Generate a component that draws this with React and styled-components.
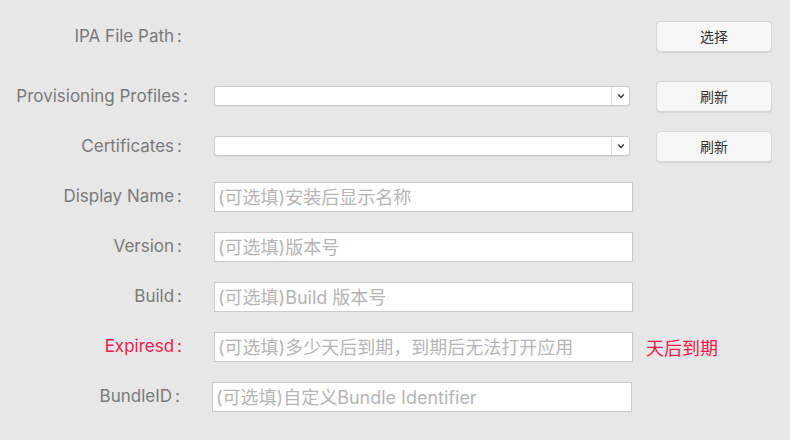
import React from "react";
import styled, { createGlobalStyle } from "styled-components";

const GlobalStyle = createGlobalStyle`
  html, body {
    margin: 0;
    padding: 0;
    background: #e7e7e7;
  }
  body {
    font-family: Inter, "Noto Sans CJK SC", sans-serif;
  }
`;

const Form = styled.div`
  width: 790px;
  height: 440px;
  box-sizing: border-box;
  padding-top: 12px;
  display: flex;
  flex-direction: column;
`;

const Row = styled.div`
  height: 50px;
  display: flex;
  align-items: center;
  margin-bottom: ${props => (props.spaced ? "10px" : "0")};
`;

const Label = styled.div`
  width: ${props => 182 + (props.shift || 0)}px;
  margin-right: ${props => 32 - (props.shift || 0) - (props.pull || 0)}px;
  flex-shrink: 0;
  text-align: right;
  white-space: nowrap;
  font-size: 17px;
  padding-bottom: 3px;
  color: ${props => (props.alert ? "#f5174b" : "#7a7a7a")};
  font-family: Inter, "Noto Sans CJK SC", sans-serif;
`;

const Colon = styled.span`
  margin-left: 3px;
`;

const Spacer = styled.div`
  width: ${props => props.w}px;
  flex-shrink: 0;
`;

const SelectBox = styled.div`
  width: 416px;
  height: 20px;
  margin-bottom: 2px;
  box-sizing: border-box;
  background: #fff;
  border: 1px solid #cbcbcb;
  border-radius: 3px;
  display: flex;
  justify-content: flex-end;
  box-shadow: 0 1px 1px rgba(0, 0, 0, 0.06);
`;

const ArrowCell = styled.div`
  width: 17px;
  border-left: 1px solid #dcdcdc;
  display: flex;
  align-items: center;
  justify-content: center;
`;

const TextField = styled.input`
  width: ${props => props.w || 419}px;
  height: 30px;
  box-sizing: border-box;
  border: 1px solid #c9c9c9;
  background: #fff;
  padding: 0 0 0 3px;
  font-size: 18px;
  font-family: Inter, "Noto Sans CJK SC", sans-serif;
  color: #333;
  outline: none;
  &::placeholder {
    color: #b5b5b5;
  }
`;

const Button = styled.button`
  width: 116px;
  height: 31px;
  margin-left: ${props => props.offset}px;
  margin-bottom: 2px;
  box-sizing: border-box;
  background: #f6f6f6;
  border: 1px solid #d6d6d6;
  border-radius: 4px;
  box-shadow: 0 1px 1px rgba(0, 0, 0, 0.08);
  font-size: 14px;
  color: #333;
  font-family: "Noto Sans CJK SC", sans-serif;
  padding: 0;
`;

const Hint = styled.span`
  margin-left: 13px;
  font-size: 18px;
  color: #f5174b;
  font-family: "Noto Sans CJK SC", sans-serif;
`;

const Chevron = () => (
  <svg width="8" height="6" viewBox="0 0 8 6">
    <path d="M1.2 1.6 L4 4.4 L6.8 1.6" fill="none" stroke="#333" strokeWidth="1.4" />
  </svg>
);

const Select = () => (
  <SelectBox>
    <ArrowCell>
      <Chevron />
    </ArrowCell>
  </SelectBox>
);

const FieldLabel = ({ children, ...rest }) => (
  <Label {...rest}>
    {children}
    <Colon>:</Colon>
  </Label>
);

const fields = [
  { label: "Display Name", ph: "(可选填)安装后显示名称" },
  { label: "Version", ph: "(可选填)版本号" },
  { label: "Build", ph: "(可选填)Build 版本号" },
];

export default function App() {
  return (
    <>
      <GlobalStyle />
      <Form>
        <Row spaced>
          <FieldLabel>IPA File Path</FieldLabel>
          <Spacer w={416} />
          <Button offset={26}>选择</Button>
        </Row>
        <Row>
          <FieldLabel shift={6}>Provisioning Profiles</FieldLabel>
          <Select />
          <Button offset={26}>刷新</Button>
        </Row>
        <Row>
          <FieldLabel>Certificates</FieldLabel>
          <Select />
          <Button offset={26}>刷新</Button>
        </Row>
        {fields.map(f => (
          <Row key={f.label}>
            <FieldLabel>{f.label}</FieldLabel>
            <TextField placeholder={f.ph} />
          </Row>
        ))}
        <Row>
          <FieldLabel alert>Expiresd</FieldLabel>
          <TextField placeholder="(可选填)多少天后到期，到期后无法打开应用" />
          <Hint>天后到期</Hint>
        </Row>
        <Row>
          <FieldLabel shift={-2} pull={2}>BundleID</FieldLabel>
          <TextField w={420} placeholder="(可选填)自定义Bundle Identifier" />
        </Row>
      </Form>
    </>
  );
}
